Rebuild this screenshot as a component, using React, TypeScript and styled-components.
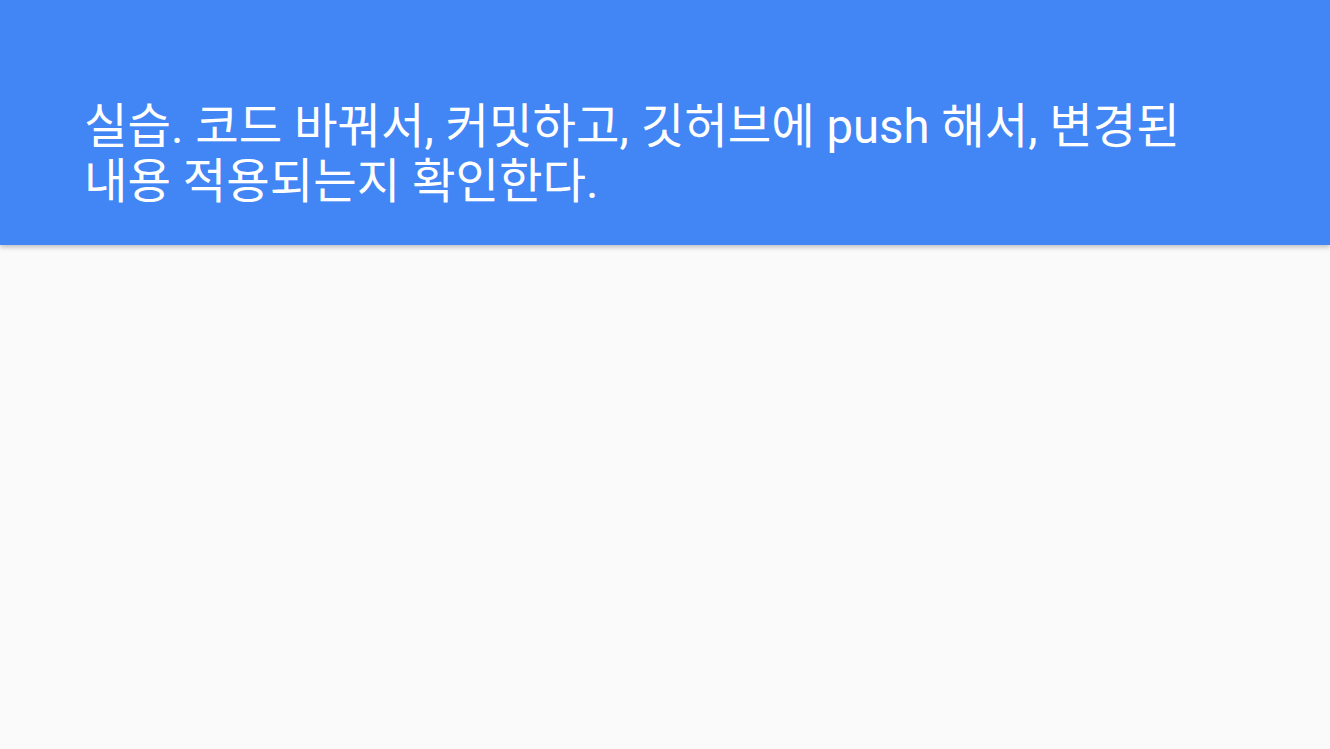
import React from 'react';
import styled, { createGlobalStyle } from 'styled-components';

const GlobalStyle = createGlobalStyle`
  html, body {
    margin: 0;
    padding: 0;
    background: #fafafa;
    height: 100%;
  }
  #root {
    height: 100%;
  }
`;

const Slide = styled.div`
  width: 1330px;
  height: 749px;
  background: #fafafa;
  overflow: hidden;
`;

const Header = styled.header`
  box-sizing: border-box;
  height: 245px;
  padding: 100px 84px 0;
  background: #4285f4;
  box-shadow: 0 2px 5px rgba(0, 0, 0, 0.25);
`;

const Title = styled.h1`
  margin: 0;
  color: #fff;
  font-family: Roboto, 'Noto Sans CJK KR', sans-serif;
  font-weight: 400;
  font-size: 47.3px;
  line-height: 55px;
  max-width: 1130px;
  word-break: keep-all;
`;

const App: React.FC = () => {
  return (
    <>
      <GlobalStyle />
      <Slide>
        <Header>
          <Title>
            실습. 코드 바꿔서, 커밋하고, 깃허브에 push 해서, 변경된 내용 적용되는지 확인한다.
          </Title>
        </Header>
      </Slide>
    </>
  );
};

export default App;
